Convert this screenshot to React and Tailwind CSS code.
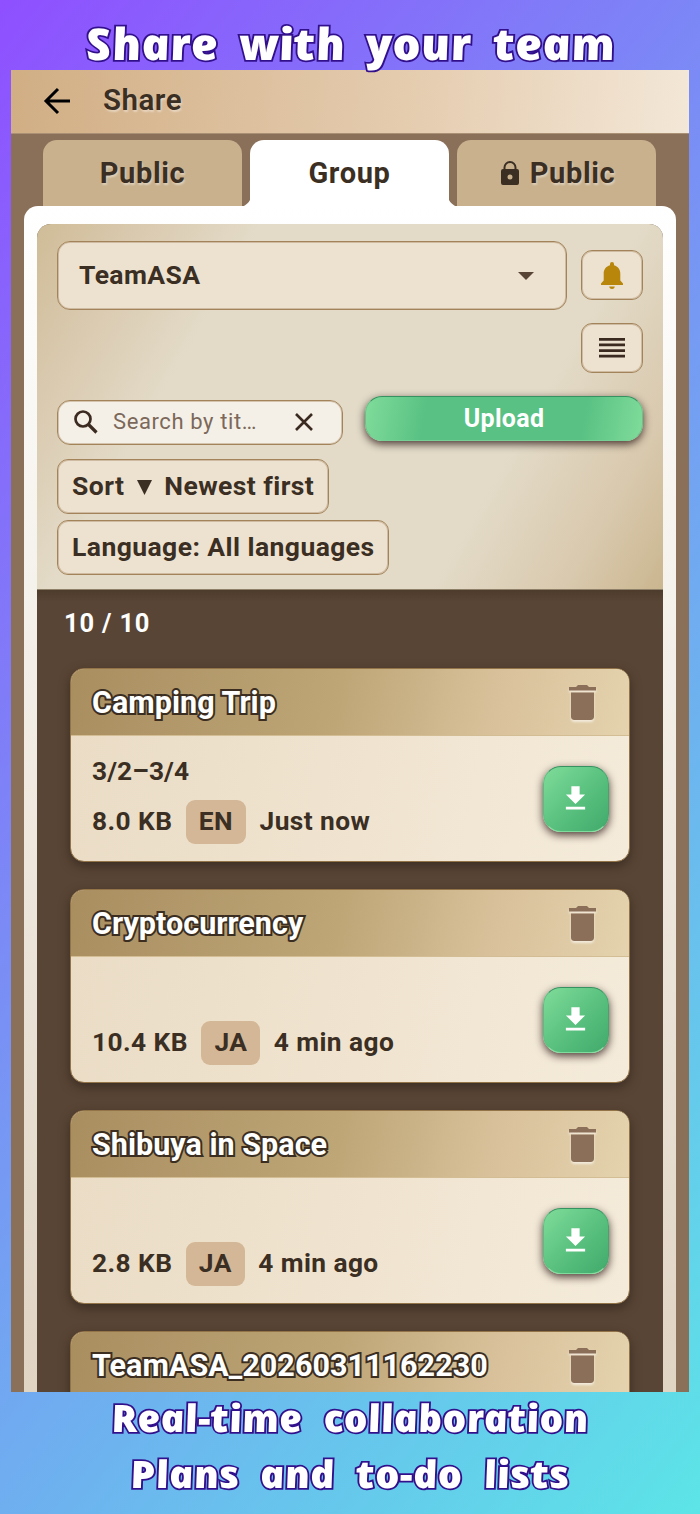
import React from "react";

const DownloadIcon = () => (
  <svg viewBox="0 0 24 24" className="h-[33px] w-[33px]" fill="#fff">
    <path d="M19 9h-4V3H9v6H5l7 7 7-7zM5 18v2h14v-2H5z" />
  </svg>
);

const TrashIcon = () => (
  <svg viewBox="0 0 27 35" className="h-[35px] w-[27px] drop-shadow-[0_2px_1px_rgba(255,255,255,0.6)]" fill="#8b6f58">
    <path d="M0 2h7l2-2h9l2 2h7v3.6H0zM2 7.6h23v24a3.4 3.4 0 0 1-3.400 3.400H5.400A3.400 3.400 0 0 1 2 31.600z" />
  </svg>
);

function Headline({ words, className }) {
  return (
    <div className={"flex justify-center whitespace-nowrap font-extrabold italic leading-none text-white [font-family:'Open_Sans',sans-serif] [-webkit-text-stroke:3.500px_#32108c] [paint-order:stroke_fill] [stroke-linejoin:round] " + className}>
      {words.map((w) => (
        <span key={w} className="inline-block skew-x-[10deg]">{w}</span>
      ))}
    </div>
  );
}

function Card({ title, dates, size, lang, time }) {
  return (
    <article className="shrink-0 overflow-hidden rounded-[14px] border-[1.500px] border-[#927448] bg-linear-[100deg,#eadcc5,#f5ebda] shadow-[0_4px_12px_rgba(0,0,0,0.35)]">
      <header className="flex h-[67px] items-center justify-between border-b border-[#d3bd94] bg-linear-[100deg,#a98e60,#bea677_48%,#d8c09a_75%,#e4d3ae] pr-[33px] pl-[21px]">
        <h2 className="pt-[2px] text-[30.500px] font-bold tracking-[0.03px] text-white [-webkit-text-stroke:4px_#3b2e21] [paint-order:stroke_fill] [stroke-linejoin:round]">{title}</h2>
        <TrashIcon />
      </header>
      {size && (
        <div className="flex h-[125px] items-center justify-between pr-[20px] pl-[21px]">
          <div className="text-[26.300px] font-bold tracking-[0.42px] text-[#3b2e23]">
            <div className="h-[46px] leading-[34px] tracking-[0.1px]">{dates}</div>
            <div className="flex h-[44px] items-center gap-[13.500px] whitespace-nowrap">
              <span className="pt-px">{size}</span>
              <span className="flex h-[44px] items-center rounded-[9px] bg-[#d4b796] px-[13px] pt-px">{lang}</span>
              <span className="pt-px">{time}</span>
            </div>
          </div>
          <button className="flex h-[66px] w-[66px] items-center justify-center rounded-[18px] border-[1.500px] border-t-[#369260] border-r-[#45a46c] border-b-[#7fdc9c] border-l-[#58be7e] bg-linear-[135deg,#80dc9a,#5bc280_50%,#41ab6c] pr-[2px] shadow-[0_3px_8px_rgba(20,0,0,0.75)]">
            <DownloadIcon />
          </button>
        </div>
      )}
    </article>
  );
}

const TAB = "flex h-[67px] w-[199px] items-center justify-center rounded-t-[14px] text-[29px] font-bold tracking-[0.65px] text-[#3b2e23]";
const BOX = "border border-[#a3835a] bg-[#ede2d0] shadow-[inset_0_0_0_1px_rgba(163,131,90,0.4)]";

export default function App() {
  return (
    <main className="flex h-[1514px] w-[700px] flex-col overflow-hidden bg-linear-[129deg,#8f50ff,#5ce5e7] [font-family:Roboto,sans-serif]">
      <Headline words={["Share", "with", "your", "team"]} className="h-[70px] scale-x-[1.075] gap-[20px] pt-[21px] text-[44px]" />

      <section className="mx-[11px] flex h-[1322px] w-[678px] shrink-0 flex-col overflow-hidden bg-[#8a6f59]">
        <header className="flex h-[64px] shrink-0 items-center border-b border-[#aa9074] bg-linear-[95deg,#d1ae84,#e6ceb2_62%,#f3e7d7] pl-[32px]">
          <svg viewBox="0 0 28 28" className="mt-[-2px] h-[28px] w-[28px]" fill="none" stroke="#000" strokeWidth="3">
            <path d="M27 14H3M15 2L3 14l12 12" />
          </svg>
          <h1 className="mt-[-2px] ml-[32px] text-[29.500px] font-semibold tracking-[0.5px] text-[#3b2e23] [text-shadow:1px_2px_2px_rgba(255,255,255,0.4)]">Share</h1>
        </header>

        <nav className="flex h-[72px] shrink-0 gap-[8px] pt-[6px] pl-[32px]">
          <div className={TAB + " bg-[#c9b18d] [text-shadow:1px_2px_2px_rgba(255,255,255,0.4)]"}>Public</div>
          <div className={TAB + " relative bg-white"}>
            Group
            <svg className="absolute bottom-0 left-[-8px] h-[8px] w-[215px]" viewBox="0 0 215 8" fill="#fff">
              <path d="M8 1v7H0q6-3 8-7zM207 1v7h8q-6-3-8-7z" />
            </svg>
          </div>
          <div className={TAB + " gap-[11px] bg-[#c9b18d] pl-[3px] [text-shadow:1px_2px_2px_rgba(255,255,255,0.4)]"}>
            <svg viewBox="0 0 18 24" className="mb-px h-[24px] w-[18px]" fill="#3b2e23">
              <path fillRule="evenodd" d="M2.500 8V6.500a6.500 6.500 0 0 1 13 0V8h.5a2 2 0 0 1 2 2v12a2 2 0 0 1-2 2H2a2 2 0 0 1-2-2V10a2 2 0 0 1 2-2zM4.500 8h9V6.500a4.500 4.500 0 0 0-9 0zM9 13.500a2.500 2.500 0 1 0 0 5 2.500 2.500 0 0 0 0-5z" />
            </svg>
            Public
          </div>
        </nav>

        <div className="mx-[13px] flex min-h-0 flex-1 flex-col rounded-t-[14px] bg-linear-to-b from-white to-[#e0d4c3] px-[13px] pt-[18px]">
          <div className="flex min-h-0 flex-1 flex-col overflow-hidden rounded-t-[14px] bg-[#594535]">
            <div className="h-[366px] shrink-0 border-b border-[#8f806a] bg-linear-[120deg,#cfbc97,#dacab0_13%,#e3dbc8_27%,#e3dbc8_72%,#d9c9ae_88%,#cab68f] px-[20px] pt-[17px]">
              <div className="flex justify-between">
                <div className={BOX + " flex h-[69px] w-[510px] items-center justify-between rounded-[13px] pr-[32px] pb-px pl-[21px]"}>
                  <span className="text-[26.500px] font-bold tracking-[0.4px] text-[#3b2e23]">TeamASA</span>
                  <svg viewBox="0 0 16 8" className="mt-[2px] h-[8px] w-[16px]" fill="#594535"><path d="M0 0h16L8 8z" /></svg>
                </div>
                <div className="flex flex-col gap-[23px] pt-[9px]">
                  <button className={BOX + " flex h-[50px] w-[62px] items-center justify-center rounded-[11px]"}>
                    <svg viewBox="0 0 22 27" className="h-[27px] w-[22px]" fill="#b8860b">
                      <path d="M11 0a2 2 0 0 1 2 2v1.200c4 1 6.300 4.300 6.300 8.300v7l2.700 3V23H0v-1.500l2.700-3v-7c0-4 2.300-7.300 6.300-8.300V2a2 2 0 0 1 2-2zM8.300 24.500h5.400a2.700 2.500 0 0 1-5.400 0z" />
                    </svg>
                  </button>
                  <button className={BOX + " flex h-[50px] w-[62px] items-center justify-center rounded-[11px]"}>
                    <svg viewBox="0 0 26 20" className="h-[20px] w-[26px]" fill="#3b2a20">
                      <path d="M0 0h26v2.700H0zM0 5.600h26v2.700H0zM0 11.200h26v2.700H0zM0 16.800h26v2.700H0z" />
                    </svg>
                  </button>
                </div>
              </div>

              <div className="mt-[22px] flex h-[50px] justify-between">
                <div className="mt-[5px] flex h-[45px] w-[286px] shrink-0 items-center rounded-[13px] border border-[#a3835a] bg-[#f5f0e7] pb-px pl-[16px] shadow-[inset_0_0_0_1px_rgba(163,131,90,0.4)]">
                  <svg viewBox="0 0 24 24" className="h-[24px] w-[24px]" fill="none" stroke="#3b2a20" strokeWidth="2.700">
                    <circle cx="9" cy="9" r="7.500" /><path d="M14.500 14.500l8 8" strokeWidth="3.200" />
                  </svg>
                  <span className="mb-px ml-[15px] w-[145px] text-[22px] tracking-[0.6px] whitespace-nowrap text-[#7b685a]">Search by tit…</span>
                  <svg viewBox="0 0 18 18" className="ml-[37px] h-[18px] w-[18px]" fill="none" stroke="#3b2a20" strokeWidth="2.600"><path d="M1 1l16 16M17 1L1 17" /></svg>
                </div>
                <button className="mt-px h-[45px] w-[278px] rounded-[17px] border-[1.500px] border-t-[#369260] border-r-[#67c286] border-b-[#77d196] border-l-[#67c286] bg-linear-[100deg,#80dc9a,#58c183_22%,#58c183_78%,#80dc9a] pt-px text-[25px] font-bold tracking-[0.3px] text-white shadow-[0_3px_8px_rgba(20,0,0,0.75)]">Upload</button>
              </div>

              <div className="mt-[14px] flex flex-col items-start gap-[6px] text-[26.500px] font-bold tracking-[0.43px] whitespace-nowrap text-[#3b2e23]">
                <div className={BOX + " flex h-[55px] w-[272px] items-center rounded-[11px] pb-[2px] pl-[14px]"}>
                  Sort
                  <svg viewBox="0 0 16 16" className="mt-[3px] mr-[12px] ml-[13px] h-[15px] w-[15px]" fill="#3b2e23"><path d="M0 0h16L8 16z" /></svg>
                  Newest first
                </div>
                <div className={BOX + " flex h-[55px] w-[332px] items-center rounded-[11px] pb-[2px] pl-[14px]"}>Language: All languages</div>
              </div>
            </div>

            <div className="flex h-[78px] shrink-0 items-center bg-linear-to-b from-[#4d3b2c] via-[#594535] via-15% to-[#594535] pb-[12px] pl-[27px] text-[25.500px] font-bold tracking-[0.8px] text-white">10 / 10</div>

            <div className="flex flex-col gap-[27px] px-[33px]">
              <Card title="Camping Trip" dates="3/2–3/4" size="8.0 KB" lang="EN" time="Just now" />
              <Card title="Cryptocurrency" size="10.4 KB" lang="JA" time="4 min ago" />
              <Card title="Shibuya in Space" size="2.8 KB" lang="JA" time="4 min ago" />
              <Card title="TeamASA_20260311162230" size=" " />
            </div>
          </div>
        </div>
      </section>

      <footer className="flex flex-col">
        <Headline words={["Real-time", "collaboration"]} className="h-[55px] scale-x-[1.05] gap-[21px] pt-[6px] text-[38px]" />
        <Headline words={["Plans", "and", "to-do", "lists"]} className="h-[55px] scale-x-[1.07] gap-[20px] pt-[7px] text-[38px]" />
      </footer>
    </main>
  );
}
